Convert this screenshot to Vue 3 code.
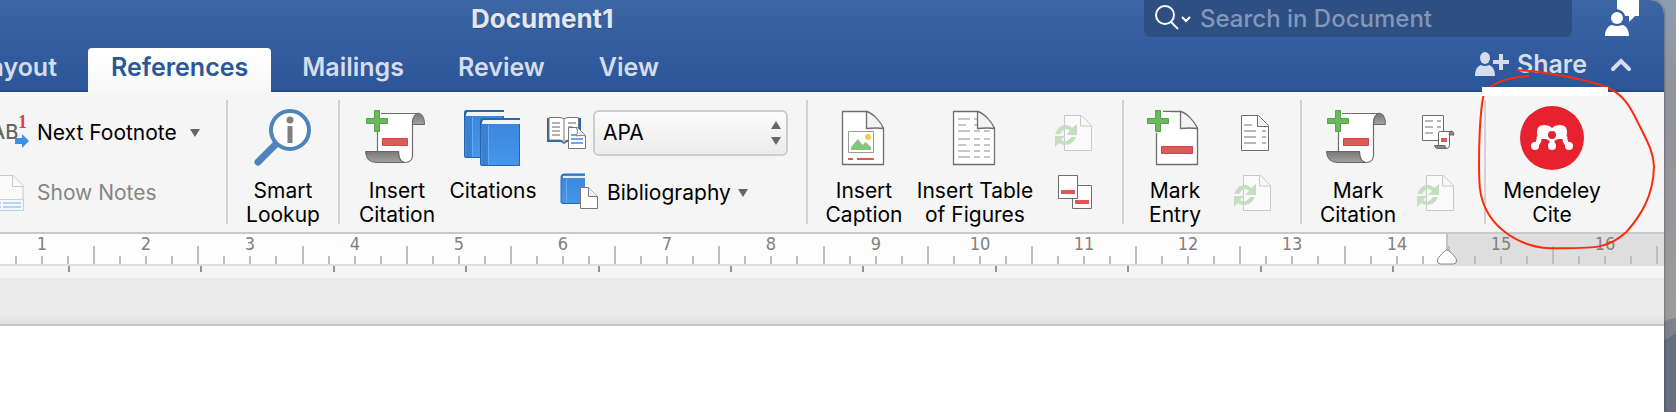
<template>
    <div class="desktop">
        <div class="window">
            <header class="header">
                <div class="titlebar">
                    <h1 class="title">Document1</h1>
                    <label class="search">
                        <svg width="40" height="30" viewBox="0 0 40 30" fill="none" stroke="#fff" stroke-width="2">
                            <circle cx="11" cy="11" r="9" />
                            <path d="M17 18l7 7" />
                            <path d="M28 13l4 4 4-4" />
                        </svg>
                        <input v-model="search" type="text" placeholder="Search in Document" aria-label="Search in Document" />
                    </label>
                    <button class="account" aria-label="Account">
                        <svg width="36" height="37" viewBox="0 0 36 37" fill="#fff">
                            <path d="M13 0h22v16h-4l-6 6v-6h-4q-1-5-8-7z" />
                            <circle cx="13" cy="18" r="8" fill="#3860a0" />
                            <circle cx="13" cy="18" r="6" />
                            <path d="M1 36c0-7 4-11 7-11q5 2 10 0c4 0 7 5 7 11z" />
                        </svg>
                    </button>
                </div>
                <div class="tabrow">
                    <nav class="tabs">
                        <button
                            v-for="tab in tabs"
                            :key="tab"
                            class="tab"
                            :class="{ active: tab === current, cut: tab === 'Layout' }"
                            @click="current = tab"
                        >
                            {{ tab }}
                        </button>
                    </nav>
                    <button class="share">
                        <svg width="36" height="26" viewBox="0 0 36 26" fill="#d5ddec">
                            <ellipse cx="11" cy="7" rx="5" ry="6" />
                            <path d="M1 25c0-7 3-10 6-11q4 2 8 0c3 1 6 4 6 11z" />
                            <path d="M25 3h4v6h6v4h-6v6h-4v-6h-6v-4h6z" />
                        </svg>
                        Share
                    </button>
                    <button class="collapse" aria-label="Collapse ribbon">
                        <svg width="22" height="14" viewBox="0 0 22 14" fill="none" stroke="#d5ddec" stroke-width="4" stroke-linecap="round">
                            <path d="M3 11l8-8 8 8" />
                        </svg>
                    </button>
                </div>
            </header>

            <!-- Drawings used several times in the ribbon -->
            <svg class="defs" width="0" height="0" aria-hidden="true">
                <defs>
                    <linearGradient id="roll" x1="0" y1="0" x2="0" y2="1">
                        <stop offset="0" stop-color="#777" />
                        <stop offset="1" stop-color="#a2a2a2" />
                    </linearGradient>
                    <linearGradient id="cover" x1="0" y1="0" x2="0" y2="1">
                        <stop offset="0" stop-color="#3b86da" />
                        <stop offset="1" stop-color="#4496ec" />
                    </linearGradient>
                    <g id="plus">
                        <path d="M9.500 4.500h5v8h8v5h-8v8h-5v-8h-8v-5h8z" fill="#6bb85f" stroke="#55a548" />
                    </g>
                    <g id="page" fill="#fff" stroke="#6e6e6e" stroke-width="1.300" stroke-linejoin="round">
                        <path d="M10.500 5.500H35L51.500 22v36.500h-41z" />
                    </g>
                    <g id="fold" stroke="#6e6e6e" stroke-width="1.300" stroke-linejoin="round">
                        <path d="M34.500 5.500V22.500q10-1 17 0C49 16 41 7 34.500 5.500z" fill="#f3f3f3" />
                    </g>
                    <g id="scroll">
                        <path d="M12.500 46V10q1-2.500 5-2.500H54q-6 1-6.500 8V50q-1 6.500-7 6.500-7 0-7-11z" fill="#fff" stroke="#6e6e6e" stroke-width="1.200" />
                        <path d="M47.500 18.500c0-15 12-15 12 0z" fill="url(#roll)" stroke="#666" />
                        <path d="M.5 45.500h33q0 10 6 11H12Q1 56.500.5 45.500z" fill="url(#roll)" stroke="#666" />
                        <path d="M17.500 32.500h25v7h-25z" fill="#de5a5a" stroke="#cf4545" />
                    </g>
                    <g id="refresh">
                        <path d="M10.500 6.500h17l10 10v25h-27z" fill="#fafafa" stroke="#c8c8c8" />
                        <path d="M26.500 6.500v10.500h11" fill="#f8f8f8" stroke="#c8c8c8" />
                        <path d="M1 25q4-10 12-9 3 .5 5 3l5-4v11H12l4-4q-5-5-10 3z" fill="#c3dfbf" />
                        <path d="M22 28q-4 9-12 8-3-.5-5-2l-4 4V27h10l-4 4q5 4 10-3z" fill="#c3dfbf" />
                    </g>
                </defs>
            </svg>

            <div class="ribbon">
                <section class="group notes">
                    <div class="stack">
                        <button class="small">
                            <svg width="30" height="46" viewBox="0 0 30 46">
                                <text x="-9" y="29" class="abc">AB</text>
                                <text x="18" y="18" class="one">1</text>
                                <path d="M15 28h7v-4l7 7-7 7v-4h-7z" fill="#3f8fe6" />
                            </svg>
                            Next Footnote
                            <span class="arrow"></span>
                        </button>
                        <button class="small" disabled>
                            <svg width="30" height="46" viewBox="0 0 30 46">
                                <path d="M-4 5.500h17l10 10v25H-4z" fill="#fafafa" stroke="#c8c8c8" />
                                <path d="M12.500 5.500v11h11" fill="none" stroke="#c8c8c8" />
                                <path d="M-4 29.500h27.500v11H-4z" fill="#f3f8fe" stroke="#b7d3f2" />
                                <path d="M0 33h1m2 0h18M0 37h1m2 0h18" stroke="#b7d3f2" stroke-width="2" />
                            </svg>
                            Show Notes
                        </button>
                    </div>
                </section>

                <section class="group lookup">
                    <button class="big">
                        <svg width="64" height="64" viewBox="0 0 64 64">
                            <path d="M27 36L7 56" stroke="#4e84bb" stroke-width="7" stroke-linecap="round" />
                            <circle cx="39" cy="24" r="19" fill="#fff" stroke="#4e84bb" stroke-width="4" />
                            <circle cx="39" cy="14" r="3.500" fill="#808080" />
                            <path d="M36.500 20h5v17h-5z" fill="#808080" />
                        </svg>
                        <span>Smart<br />Lookup</span>
                    </button>
                </section>

                <section class="group citations">
                    <button class="big">
                        <svg width="64" height="64" viewBox="0 0 64 64">
                            <use href="#scroll" />
                            <path d="M7 4h9v4q-2 1-3 5v13H7z" fill="#f6f6f6" />
                            <use href="#plus" />
                        </svg>
                        <span>Insert<br />Citation</span>
                    </button>
                    <button class="big">
                        <svg width="64" height="64" viewBox="0 0 64 64">
                            <g v-for="book in books" :key="book" :transform="book">
                                <path d="M3 0h37v48H3q-3 0-3-2V3q0-3 3-3z" fill="url(#cover)" />
                                <path d="M1 5h7v42H2z" fill="#3a80d0" />
                                <path d="M3 0h37v2H5Q2 2 2 6H0V3q0-3 3-3z" fill="#2868b2" />
                                <path d="M4 2h36v4H2q0-4 2-4z" fill="#f1f4f8" />
                                <path d="M8.500 7v41" stroke="#69a9ee" />
                                <path d="M.5 4v42q0 1.500 2 1.500h37V6" fill="none" stroke="#2465b0" />
                            </g>
                        </svg>
                        <span>Citations</span>
                    </button>
                    <div class="stack">
                        <div class="small">
                            <svg width="40" height="46" viewBox="0 0 40 46">
                                <path d="M1 8h34v24H21l-3 2-3-2H1z" fill="#2468b4" />
                                <path d="M3 7.500h11q3 0 4 2 1-2 4-2h10.500V30H22q-3 0-4 3-1-3-4-3H3z" fill="#fff" stroke="#777" />
                                <path d="M18 9v23" stroke="#bbb" stroke-width="2" />
                                <path d="M6 13h8m-8 4h8m-8 4h8m-8 4h8m8-12h8m-8 4h5" stroke="#b0b0b0" stroke-width="2" />
                                <path d="M22.500 17.500h9l8 8v13h-17z" fill="#fff" stroke="#777" />
                                <path d="M30.500 17.500q2 4 0 8.500 5-1.500 9 0" fill="#f2f2f2" stroke="#777" />
                                <path d="M25 25h5m-5 4h12m-12 4h12" stroke="#6aa9ee" stroke-width="2" />
                            </svg>
                            <span class="picker">
                                <select v-model="style" aria-label="Citation style">
                                    <option>APA</option>
                                    <option>Chicago</option>
                                    <option>MLA</option>
                                </select>
                                <svg class="updown" width="10" height="24" viewBox="0 0 10 24" fill="#666">
                                    <path d="M0 8l5-8 5 8zM0 16h10l-5 8z" />
                                </svg>
                            </span>
                        </div>
                        <button class="small indent">
                            <svg width="40" height="46" viewBox="0 0 40 46">
                                <path d="M4 4h21v30H3q-2 0-2-2V7q0-3 3-3z" fill="url(#cover)" />
                                <path d="M25 4H4Q1 4 1 7v25q0 1.500 2 1.500h20" fill="none" stroke="#2868b2" />
                                <path d="M3 6h22v2H3z" fill="#e6eefa" />
                                <path d="M6.500 9v24" stroke="#69a9ee" />
                                <path d="M20.500 17.500h8l9 9v12h-17z" fill="#fff" stroke="#777" />
                                <path d="M28.500 17.500v9h9" fill="#f2f2f2" stroke="#777" />
                            </svg>
                            Bibliography
                            <span class="arrow near"></span>
                        </button>
                    </div>
                </section>

                <section class="group captions">
                    <button class="big">
                        <svg width="64" height="64" viewBox="0 0 64 64">
                            <use href="#page" />
                            <use href="#fold" />
                            <path d="M16.500 25.500h25v21h-25z" fill="#fff" stroke="#999" />
                            <path d="M19 44v-3l7-8 4.500 6 3-3 5.500 5v3z" fill="#86c47e" />
                            <circle cx="36" cy="31" r="3" fill="#f4c84f" />
                            <path d="M16 53h5m4 0h17" stroke="#e05555" stroke-width="2" />
                        </svg>
                        <span>Insert<br />Caption</span>
                    </button>
                    <button class="big wide">
                        <svg width="64" height="64" viewBox="0 0 64 64">
                            <use href="#page" />
                            <g stroke="#c6c6c6" stroke-width="2">
                                <path d="M15 13h12m-12 6h8m-8 6h12m-12 8h12m-12 6h8m-8 6h12m-12 6h12" />
                                <path d="M31 13h3m-3 6h3m-3 6h6m-6 8h6m-6 6h6m-6 6h6m-6 6h6" />
                                <path d="M41 25h6m-6 8h6m-6 6h6m-6 6h6m-6 6h6" />
                            </g>
                            <use href="#fold" />
                        </svg>
                        <span>Insert Table<br />of Figures</span>
                    </button>
                    <div class="stack">
                        <button class="small" disabled aria-label="Update table">
                            <svg width="40" height="46" viewBox="0 0 40 46"><use href="#refresh" /></svg>
                        </button>
                        <button class="small" aria-label="Cross-reference">
                            <svg width="40" height="46" viewBox="0 0 40 46" fill="#fff" stroke="#6e6e6e">
                                <path d="M18.500 16.500h19v23h-19z" />
                                <path d="M4.500 6.500h19v23h-19z" />
                                <path d="M7 21h14v4H7zM21 31h14v4H21z" fill="#e25555" stroke="none" />
                            </svg>
                        </button>
                    </div>
                </section>

                <section class="group index">
                    <button class="big">
                        <svg width="64" height="64" viewBox="0 0 64 64">
                            <use href="#page" x="3" />
                            <use href="#fold" x="3" />
                            <path d="M10 4h10v8h8v6h-8v9h-9z" fill="#f6f6f6" />
                            <path d="M20 6h8v12h-8z" fill="#fff" />
                            <use href="#plus" x="3" />
                            <path d="M18.500 40.500h31v7h-31z" fill="#de5a5a" stroke="#cf4545" />
                        </svg>
                        <span>Mark<br />Entry</span>
                    </button>
                    <div class="stack">
                        <button class="small" aria-label="Insert index">
                            <svg width="40" height="46" viewBox="0 0 40 46">
                                <path d="M8.500 6.500h17l10 10v25h-27z" fill="#fff" stroke="#6e6e6e" />
                                <path d="M24.500 6.500v11h11" fill="#f3f3f3" stroke="#6e6e6e" />
                                <path d="M11 16h8m-8 6h12m-12 6h12m-12 6h12m6-12h4m-4 6h4m-4 6h4" stroke="#b8b8b8" stroke-width="2" />
                            </svg>
                        </button>
                        <button class="small" disabled aria-label="Update index">
                            <svg width="40" height="46" viewBox="0 0 40 46"><use href="#refresh" /></svg>
                        </button>
                    </div>
                </section>

                <section class="group authorities">
                    <button class="big">
                        <svg width="64" height="64" viewBox="0 0 64 64">
                            <use href="#scroll" />
                            <path d="M7 4h9v4q-2 1-3 5v13H7z" fill="#f6f6f6" />
                            <use href="#plus" />
                        </svg>
                        <span>Mark<br />Citation</span>
                    </button>
                    <div class="stack">
                        <button class="small" aria-label="Insert table of authorities">
                            <svg width="40" height="46" viewBox="0 0 40 46">
                                <path d="M6.500 6.500h21v25h-21z" fill="#fff" stroke="#6e6e6e" />
                                <path d="M9 12h8m-8 6h8m-8 6h8m4-12h4m-4 6h4" stroke="#b8b8b8" stroke-width="2" />
                                <path d="M22.500 37V24q0-1.500 2-1.500h11q-2 1-2 4V36q0 3.500-3 3.500-3 0-3-3z" fill="#fff" stroke="#666" />
                                <path d="M33 26q0-4 2.500-4 2 0 2.500 4zM18.500 36.500H29q0 3 2 3h-9q-3 0-3.500-3z" fill="#888" stroke="#666" />
                                <path d="M25 29h6v4h-6z" fill="#e25555" />
                            </svg>
                        </button>
                        <button class="small" disabled aria-label="Update table of authorities">
                            <svg width="40" height="46" viewBox="0 0 40 46"><use href="#refresh" /></svg>
                        </button>
                    </div>
                </section>

                <section class="group mendeley">
                    <button class="big">
                        <svg width="64" height="64" viewBox="0 0 64 64">
                            <circle cx="32" cy="32" r="32" fill="#e6222e" />
                            <path d="M15 40q5-4 4-10M49 40q-5-4-4-10" fill="none" stroke="#fff" stroke-width="5" />
                            <path d="M17 26q0-7 7-7 5 0 8 3 3-3 8-3 7 0 7 7 0 6-3 7-3 0-6 0-3 2-6 2t-6-2q-3 0-6 0-3-1-3-7z" fill="#fff" />
                            <path d="M32 32v8" stroke="#fff" stroke-width="5" />
                            <g fill="#fff">
                                <circle cx="15" cy="40" r="4" />
                                <circle cx="32" cy="40" r="4" />
                                <circle cx="49" cy="40" r="4" />
                            </g>
                            <circle cx="32" cy="29" r="4" fill="#e6222e" />
                        </svg>
                        <span>Mendeley<br />Cite</span>
                    </button>
                </section>
            </div>

            <svg class="ruler" width="100%" height="44">
                <rect width="100%" height="30" fill="#fdfdfd" />
                <rect :x="margin" width="100%" height="30" fill="#dedede" />
                <rect y="30" width="100%" height="2" fill="#dfdfdf" />
                <rect y="32" width="100%" height="12" fill="#f5f5f5" />
                <rect :x="margin - 1" width="2" height="30" fill="#c4c4c4" />
                <rect
                    v-for="tick in ticks"
                    :key="tick.x"
                    :x="tick.x"
                    :y="tick.long ? 12 : 22"
                    width="2"
                    :height="tick.long ? 18 : 8"
                    fill="#bdbdbd"
                />
                <text v-for="n in 16" :key="n" :x="place(n)" y="16">{{ n }}</text>
                <rect v-for="x in stops" :key="x" :x="x" y="32" width="2" height="6" fill="#949494" />
                <path
                    :transform="`translate(${margin} 16)`"
                    d="M0 0q2 0 8 7 1.500 1.500 1.500 4 0 3-3 3h-13q-3 0-3-3 0-2.500 1.500-4 6-7 8-7z"
                    fill="#fff"
                    stroke="#858585"
                />
            </svg>
            <div class="gutter"></div>
            <main class="paper"></main>
        </div>

        <svg class="hill" width="12" height="94" viewBox="0 0 12 94">
            <path d="M0 3q6-2 12-3v94H0z" fill="#7d8189" />
            <path d="M0 22q7-3 12-7v79H0z" fill="#686e82" />
        </svg>

        <!-- Hand-drawn ring around the Mendeley button -->
        <svg class="ring" width="236" height="270" viewBox="0 0 708 810">
            <path
                d="M232 211C290 212 440 236 505 264C555 286 575 330 592 364C625 430 640 455 642 500C640 590 600 650 560 695C500 750 460 744 330 745C240 740 120 680 118 540C115 450 120 330 131 285C150 250 200 232 266 228"
                fill="none"
                stroke="#fb2c0c"
                stroke-width="6"
                stroke-linecap="round"
            />
            <path d="M126 261h378v27H126z" fill="#fff" />
        </svg>
    </div>
</template>

<script setup>
import { ref } from "vue";

const tabs = ["Layout", "References", "Mailings", "Review", "View"];
const current = ref("References");
const search = ref("");
const style = ref("APA");

const books = ["translate(3 4)", "translate(19 12)"];

// ruler
const unit = 104.2;
const margin = 1447;

function place(n) {
    return Math.round(42 + (n - 1) * unit);
}

const ticks = [];
for (let i = 3; i <= 66; i++) {
    ticks.push({ x: place(i / 4) - 1, long: i % 4 === 2 });
}

const stops = [];
for (let i = 0; i < 11; i++) {
    stops.push(Math.round(68 + i * 132.4));
}
</script>

<style>
body {
    margin: 0;
}
</style>

<style scoped>
.desktop {
    position: relative;
    min-height: 100vh;
    padding-right: 12px;
    box-sizing: border-box;
    display: flex;
    overflow: hidden;
    background: linear-gradient(#8d9eb0, #92929b 100px, #9b9b9b 300px);
    font-family: Inter, "Liberation Sans", sans-serif;
}

.window {
    flex: 1;
    min-width: 0;
    display: flex;
    flex-direction: column;
    overflow: hidden;
    border-top-right-radius: 14px;
    background: #fff;
    z-index: 1;
    box-shadow: 0 0 3px rgba(0, 0, 0, 0.5);
}

button {
    padding: 0;
    border: 0;
    background: none;
    font: inherit;
    color: inherit;
    white-space: nowrap;
}

svg {
    display: block;
    flex: none;
}

.defs {
    position: absolute;
}

.header {
    background: linear-gradient(#3d66a4, #335c9f 50px, #2a5699);
    box-shadow: inset 0 -2px #254b85;
    color: #d5ddec;
    font-size: 25px;
    font-weight: 600;
}

.titlebar {
    display: flex;
    height: 37px;
    padding: 0 24px 0 471px;
}

.title {
    margin: 0 auto 0 0;
    font-size: 26px;
    line-height: 38px;
    font-weight: 700;
    color: #e2e7f0;
    text-shadow: 0 1px 1px rgba(0, 0, 0, 0.25);
}

.search {
    display: flex;
    align-items: center;
    gap: 6px;
    width: 428px;
    padding-left: 10px;
    box-sizing: border-box;
    border-radius: 0 0 6px 6px;
    background: #2d4f81;
}

.search input {
    flex: 1;
    min-width: 0;
    padding: 0;
    border: 0;
    outline: 0;
    background: none;
    font: inherit;
    font-size: 24px;
    font-weight: 500;
    color: #fff;
}

.search input::placeholder {
    color: #8397ba;
    opacity: 1;
}

.account {
    margin-left: 32px;
}

.tabrow {
    display: flex;
    height: 55px;
    padding-right: 32px;
}

.tabs {
    display: flex;
    align-items: flex-end;
    gap: 8px;
    margin-right: auto;
}

.tab {
    height: 44px;
    padding: 0 23px 6px;
}

.tab.cut {
    display: flex;
    justify-content: flex-end;
    align-items: center;
    width: 80px;
}

.tab.active {
    border-radius: 4px 4px 0 0;
    background: linear-gradient(#fff, #f7f7f7);
    color: #2b579a;
}

.share {
    display: flex;
    align-items: center;
    gap: 7px;
    padding-bottom: 2px;
}

.collapse {
    margin-left: 23px;
}

.ribbon {
    display: flex;
    height: 124px;
    padding: 8px 0;
    border-bottom: 2px solid #c9c9c9;
    background: #f5f5f5;
    font-size: 21px;
    line-height: 24px;
    color: #000;
}

.group {
    display: flex;
    flex: none;
    box-sizing: border-box;
    padding-top: 6px;
    border-right: 2px solid #d2d2d2;
}

.notes {
    width: 228px;
}

.lookup {
    width: 112px;
    padding-left: 7px;
}

.citations {
    width: 468px;
    padding-left: 9px;
}

.captions {
    width: 316px;
    padding-left: 8px;
}

.index {
    width: 178px;
    padding-left: 3px;
}

.authorities {
    width: 184px;
    padding-left: 8px;
}

.mendeley {
    flex: 1;
    padding-left: 18px;
    border-right: 0;
}

.big {
    display: flex;
    flex-direction: column;
    align-items: center;
    gap: 9px;
    width: 96px;
    height: 121px;
    flex: none;
}

.big.wide {
    width: 126px;
}

.stack {
    display: flex;
    flex-direction: column;
    gap: 14px;
    padding-top: 3px;
}

.notes .stack,
.citations .stack {
    padding-top: 4px;
}

.citations .stack {
    padding-left: 5px;
}

.captions .stack {
    padding-left: 16px;
}

.index .stack,
.authorities .stack {
    padding-left: 10px;
}

.small {
    display: flex;
    align-items: center;
    gap: 7px;
    height: 46px;
}

.small:disabled {
    color: #858585;
}

.small.indent {
    margin-left: 14px;
}

.arrow {
    margin-left: 6px;
    border: 5px solid transparent;
    border-top: 8px solid #666;
    border-bottom: 0;
}

.arrow.near {
    margin-left: 0;
}

.abc {
    font: 500 20px Inter, sans-serif;
    fill: #666;
}

.one {
    font: 700 18px "Liberation Serif", serif;
    fill: #d64545;
}

.picker {
    position: relative;
}

.picker select {
    display: block;
    width: 195px;
    height: 46px;
    padding: 0 24px 0 8px;
    appearance: none;
    border: 2px solid #cdcdcd;
    border-radius: 6px;
    background: linear-gradient(#fbfbfb, #ececec);
    font: inherit;
    color: #000;
}

.updown {
    position: absolute;
    top: 11px;
    right: 7px;
    pointer-events: none;
}

.ruler text {
    font: 18px "DejaVu Sans Condensed", "DejaVu Sans", sans-serif;
    fill: #808080;
    text-anchor: middle;
}

.gutter {
    height: 46px;
    border-bottom: 2px solid #c4c4c4;
    background: linear-gradient(#ebebeb 34px, #e0e0e0);
}

.paper {
    flex: 1;
    background: #fff;
}

.hill {
    position: absolute;
    right: 0;
    bottom: 0;
}

.ring {
    position: absolute;
    top: 0;
    right: 0;
    z-index: 2;
    pointer-events: none;
}
</style>
